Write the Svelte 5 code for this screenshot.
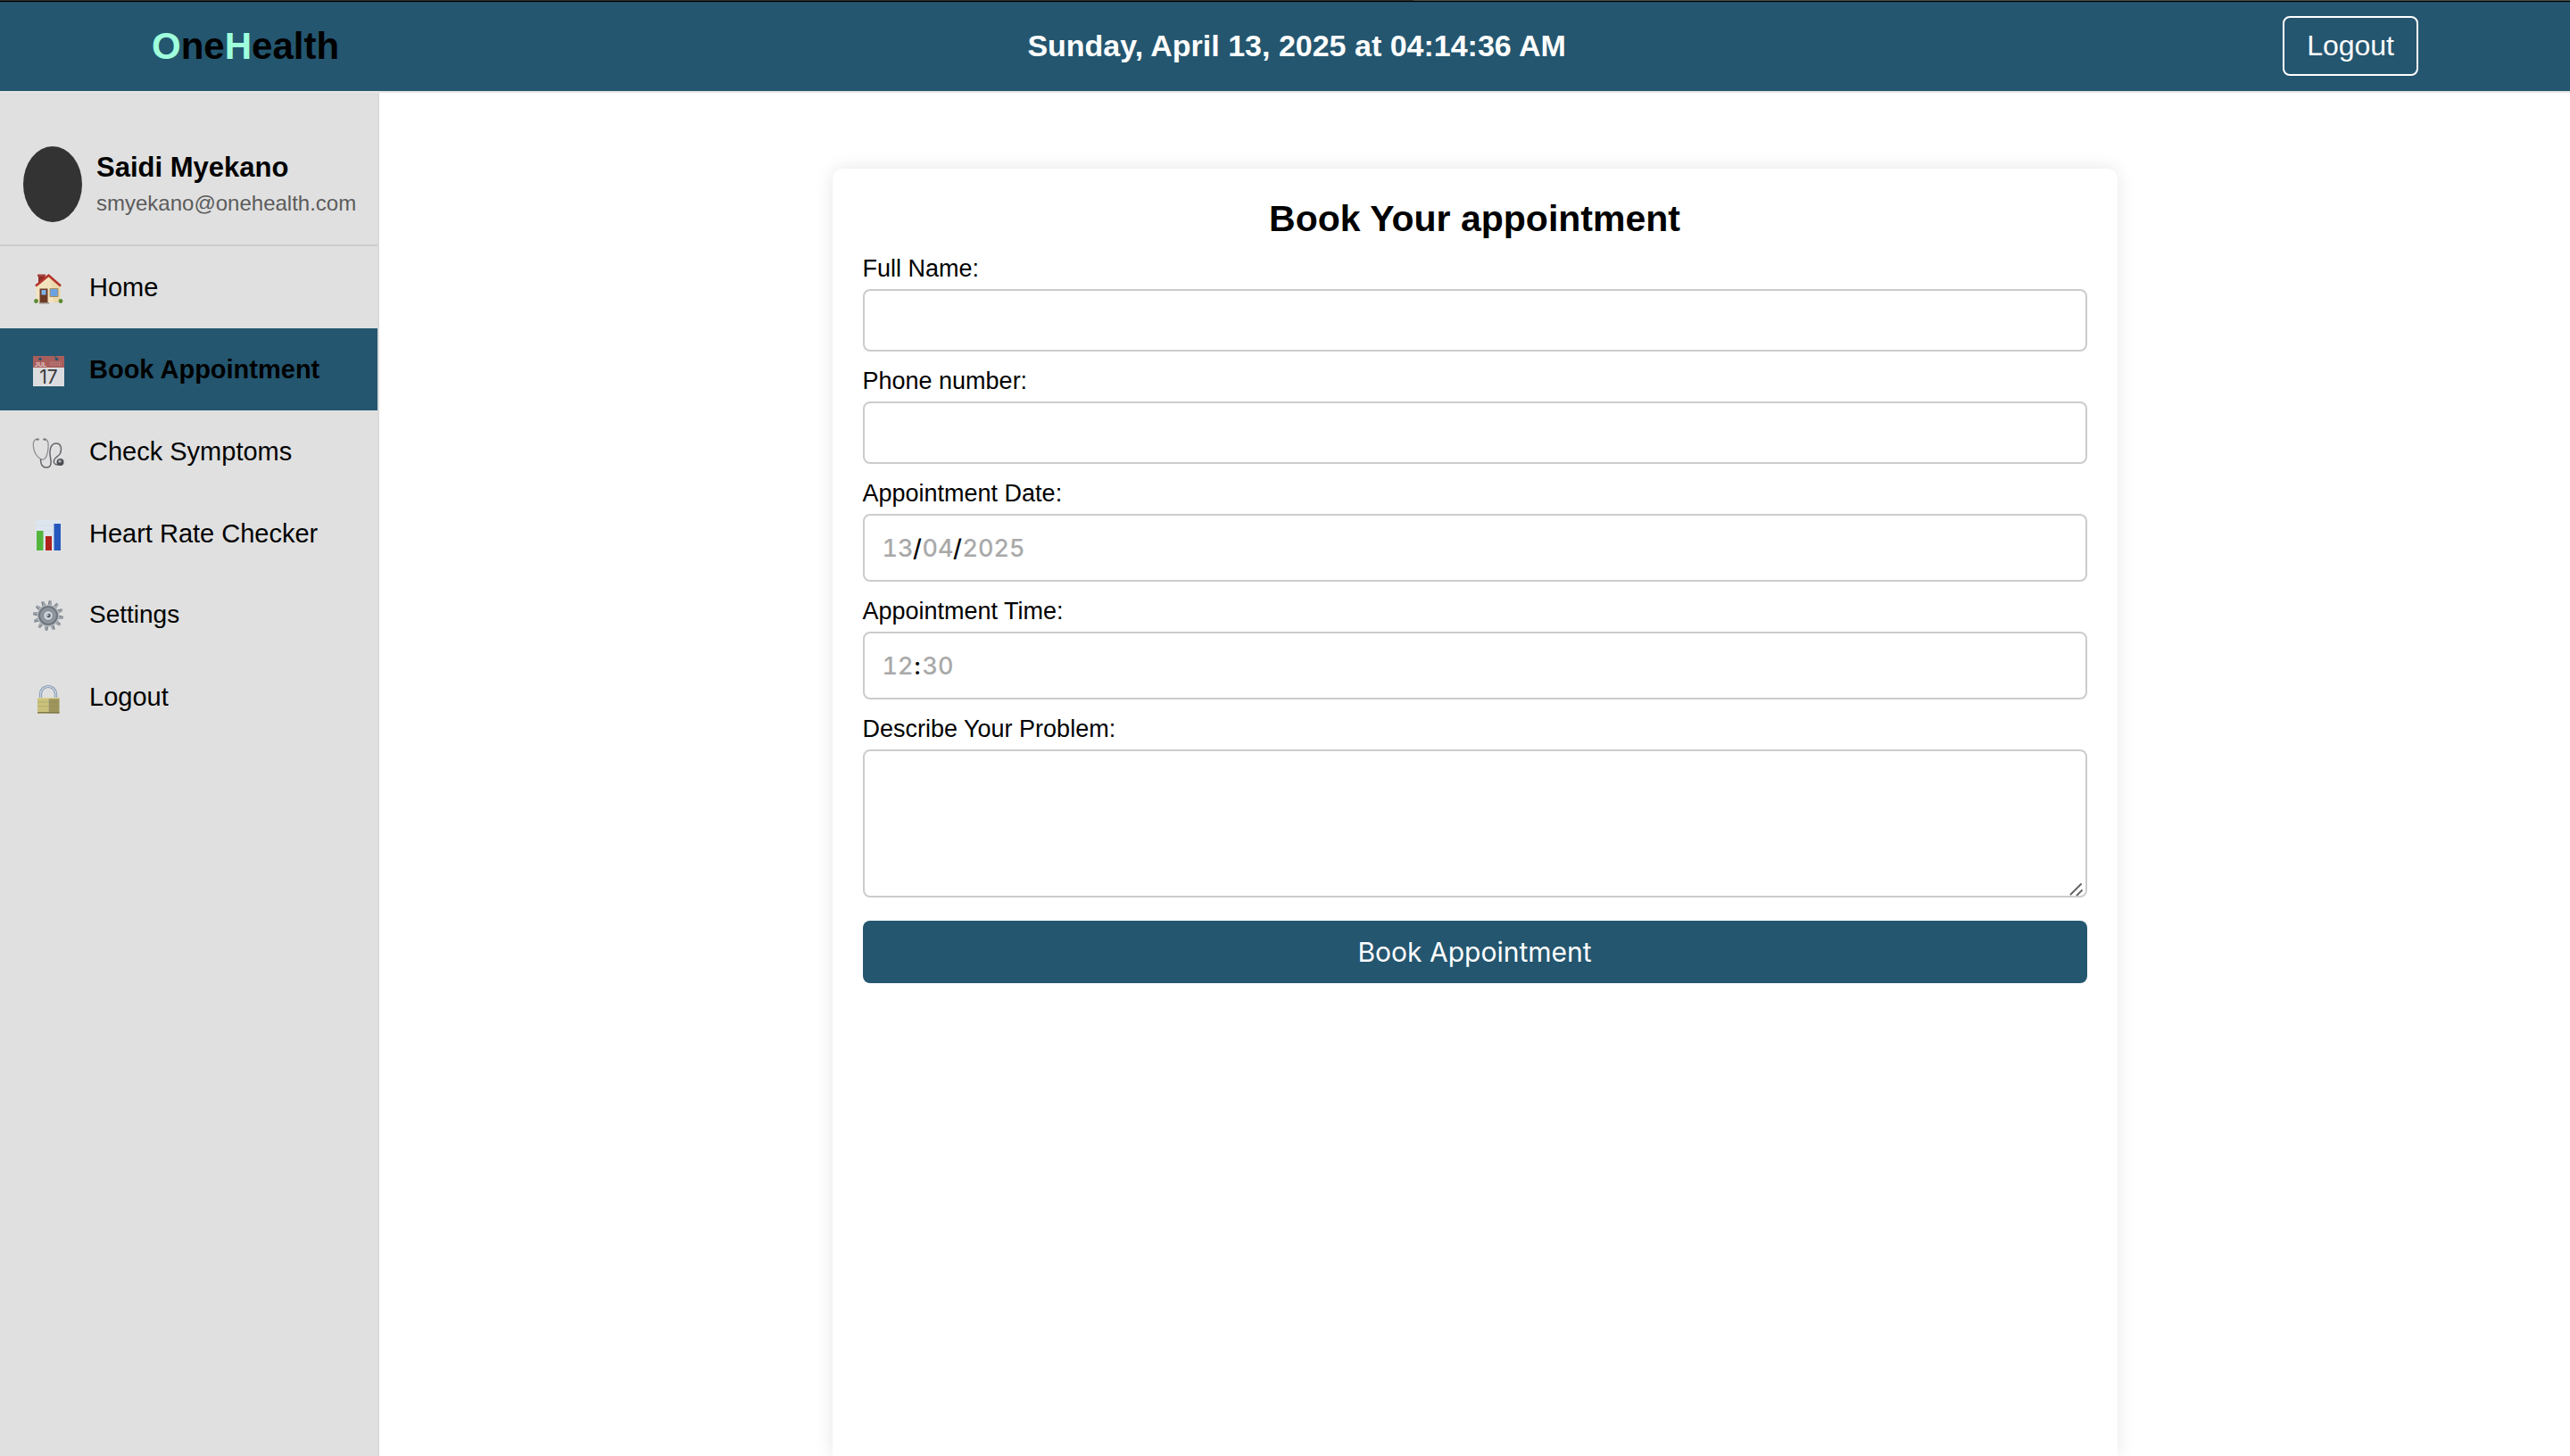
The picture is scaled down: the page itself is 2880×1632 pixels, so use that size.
<script lang="ts">
  const nav = [
    { label: 'Home', icon: 'home' },
    { label: 'Book Appointment', icon: 'calendar', active: true },
    { label: 'Check Symptoms', icon: 'stethoscope' },
    { label: 'Heart Rate Checker', icon: 'chart' },
    { label: 'Settings', icon: 'gear', compact: true },
    { label: 'Logout', icon: 'lock' },
  ];
  const teeth = Array.from({ length: 12 }, (_, i) => i * 30);
</script>

<div class="page">
  <div class="window-edge"></div>
  <header class="topbar">
    <a class="logo" href="#home"><span>O</span>ne<span>H</span>ealth</a>
    <time class="clock" datetime="2025-04-13T04:14:36">Sunday, April 13, 2025 at 04:14:36 AM</time>
    <button class="logout" type="button">Logout</button>
  </header>

  <div class="body">
    <aside class="sidebar">
      <div class="profile">
        <div class="avatar"></div>
        <div class="who">
          <strong>Saidi Myekano</strong>
          <span>smyekano@onehealth.com</span>
        </div>
      </div>
      <nav>
        {#each nav as item}
          <a class="item" class:active={item.active} class:compact={item.compact} href={'#' + item.icon}>
            <svg class="icon" viewBox="0 0 36 36" aria-hidden="true">
              {#if item.icon === 'home'}
                <path d="M7 2h7v10h-7z" fill="#8e2f28" />
                <path d="M6 1.500h9v2.500H6z" fill="#a8413a" />
                <path d="M4.500 15 18.500 3.500 31.500 15v18h-27z" fill="#f3e3bd" />
                <path d="M20 6 31.500 15v18h-7z" fill="#e6d09e" opacity=".6" />
                <path d="M4 14.500 18.500 2.800 32 14.500" fill="none" stroke="#b5332c" stroke-width="2.600" />
                <path d="M8.500 17.500h9V33h-9z" fill="#6d3a26" />
                <path d="M10.500 19h5v5.500h-5z" fill="#7db4ea" />
                <path d="M20 17.500h9v9h-9z" fill="#6aa3df" stroke="#a98a5c" />
                <path d="M8 33h11v1.500H8z" fill="#9a8f85" />
                <circle cx="4.500" cy="31.500" r="2.400" fill="#5c8a34" />
                <circle cx="32" cy="31.500" r="2.400" fill="#5c8a34" />
              {:else if item.icon === 'calendar'}
                <path d="M1 1h35v34H1z" fill="#dcdcde" />
                <path d="M1 1h35v13H1z" fill="#a95e5c" />
                <circle cx="9" cy="4.500" r="1.800" fill="#24566f" />
                <circle cx="27.500" cy="4.500" r="1.800" fill="#24566f" />
                <path d="M25 1l2.500 3" stroke="#24566f" stroke-width="1" />
                <path d="M20 8.500h13M20 11h13" stroke="#bd8582" stroke-width="1.400" stroke-dasharray="1.500 1" />
                <text class="month" x="3" y="12.500">JUL</text>
                <text class="day" x="18.500" y="32" text-anchor="middle">17</text>
              {:else if item.icon === 'stethoscope'}
                <g fill="none" stroke-linecap="round" stroke-linejoin="round">
                  <path d="M6 2.500C1.500 2 1 6 1.500 11c.6 6 4 12 9 14 5 1 7-6 7.500-13 .3-5 .5-9-4-9.500" stroke="#8d8f92" stroke-width="1.300" />
                  <path d="M9.500 25c0 5 2 9 6.500 9 6 0 5.500-6 4.500-11-1.500-8 0-16 6.500-16 5.500 0 6.500 6 4.500 11-1.500 4-6 4-7 8-.6 3 1 5 4 5" stroke="#63656a" stroke-width="1.500" />
                  <path d="M5 2.500h2M13 2.500h2" stroke="#77797d" stroke-width="2" />
                </g>
                <circle cx="31.500" cy="28" r="4" fill="#4b4b52" />
                <circle cx="31" cy="27" r="1.800" fill="#a9abb2" />
              {:else if item.icon === 'chart'}
                <path d="M4 1h28.500v34H4z" fill="#dde6ef" />
                <path d="M4 7h28M4 13h28M4 19h28M4 25h28" stroke="#cfdae5" stroke-width=".6" />
                <path d="M5 13h7.500v22H5z" fill="#53b53b" />
                <path d="M15 19h7v16h-7z" fill="#b0231b" />
                <path d="M24.500 5H32v30h-7.500z" fill="#2558bd" />
              {:else if item.icon === 'gear'}
                {#each teeth as angle}
                  <path d="M16.200 7 17 1h2.600l.8 6z" fill="#9aa1a8" transform={`rotate(${angle + 8} 18 18)`} />
                  <path d="M16.400 7 17 1" stroke="#666c73" stroke-width=".8" transform={`rotate(${angle + 8} 18 18)`} />
                {/each}
                <circle cx="18" cy="18" r="12.500" fill="#b4bac1" />
                <circle cx="18" cy="18" r="10" fill="#90969d" stroke="#70767e" stroke-width="2" />
                <circle cx="18" cy="18" r="5.500" fill="#ccd2d9" stroke="#7b828a" stroke-width="1" />
                <circle cx="18.500" cy="18" r="2.200" fill="#4d535c" />
                <circle cx="17.600" cy="17.600" r="1" fill="#e3e7eb" />
              {:else}
                <path d="M9.500 19v-6a8.500 8.500 0 0 1 17 0V19" fill="none" stroke="#7f90a6" stroke-width="3.200" />
                <path d="M9.500 19v-6a8.500 8.500 0 0 1 17 0V19" fill="none" stroke="#c3d3e6" stroke-width="1.600" />
                <path d="M6 17h12.500v17.500H6z" fill="#c9c17c" />
                <path d="M18.500 17h12v17.500h-12z" fill="#9d955c" />
                <path d="M6 17h24.500v1.200H6z" fill="#ddd69a" />
                <path d="M6 33h24.500v1.500H6z" fill="#7f7848" />
                <path d="M6 22h24.500M6 26.500h24.500" stroke="#8d8550" stroke-width=".5" opacity=".6" />
              {/if}
            </svg>
            <span>{item.label}</span>
          </a>
        {/each}
      </nav>
    </aside>

    <main>
      <form class="card">
        <h2>Book Your appointment</h2>
        <label for="name">Full Name:</label>
        <input id="name" class="box" type="text" />
        <label for="phone">Phone number:</label>
        <input id="phone" class="box" type="tel" />
        <label for="day">Appointment Date:</label>
        <div class="box segments">
          <input id="day" class="two" value="13" aria-label="Day" />
          <span>/</span>
          <input class="two" value="04" aria-label="Month" />
          <span>/</span>
          <input class="four" value="2025" aria-label="Year" />
        </div>
        <label for="hour">Appointment Time:</label>
        <div class="box segments">
          <input id="hour" class="two" value="12" aria-label="Hour" />
          <span>:</span>
          <input class="two" value="30" aria-label="Minute" />
        </div>
        <label for="problem">Describe Your Problem:</label>
        <div class="area">
          <textarea id="problem" class="box"></textarea>
          <svg class="grip" viewBox="0 0 16 16" aria-hidden="true">
            <path d="M1.500 14.500 13 3M8.500 15.500 14 10" />
          </svg>
        </div>
        <button class="submit" type="button">Book Appointment</button>
      </form>
    </main>
  </div>
</div>

<style>
  :global(body) {
    background: #fff;
  }
  .page {
    display: flex;
    flex-direction: column;
    height: 100vh;
    overflow: hidden;
    font-family: 'Liberation Sans', Arial, sans-serif;
    color: #000;
  }
  .page * {
    box-sizing: border-box;
  }
  .window-edge {
    flex: none;
    height: 2px;
    background: linear-gradient(to right, #2b312e 55%, #4b5148 55%);
    border-bottom: 1px solid #000;
  }
  .topbar {
    flex: none;
    display: flex;
    align-items: center;
    justify-content: space-between;
    height: 102px;
    padding: 0 170px 2px;
    background: #24566f;
    border-top: 1px solid #1e495f;
    border-bottom: 2px solid #e5e3e3;
  }
  .logo {
    font-size: 42px;
    font-weight: 700;
    color: #000;
    text-decoration: none;
  }
  .logo span {
    color: #9fffdc;
  }
  .clock {
    font-size: 34px;
    font-weight: 700;
    color: #fff;
  }
  .logout {
    margin-left: 32px;
    padding: 0 25px;
    height: 67px;
    border: 2px solid #fff;
    border-radius: 8px;
    background: transparent;
    color: #fff;
    font-family: inherit;
    font-size: 32px;
  }
  .body {
    flex: 1;
    display: flex;
    min-height: 0;
  }
  .sidebar {
    flex: none;
    width: 425px;
    background: #e0e0e0;
    border-right: 2px solid #dadada;
  }
  .profile {
    display: flex;
    gap: 16px;
    padding: 60px 26px 25px;
    border-bottom: 2px solid #ccc;
  }
  .avatar {
    flex: none;
    width: 66px;
    height: 85px;
    border-radius: 50%;
    background: #333;
  }
  .who {
    display: flex;
    flex-direction: column;
    gap: 6px;
    padding-top: 6px;
  }
  .who strong {
    font-size: 31px;
    line-height: 36px;
  }
  .who span {
    font-size: 24px;
    line-height: 32px;
    color: #5c5c5c;
  }
  .item {
    display: flex;
    align-items: center;
    gap: 28px;
    height: 92px;
    padding: 0 36px;
    font-size: 29px;
    color: #000;
    text-decoration: none;
    white-space: nowrap;
  }
  .active {
    background: #24566f;
    font-weight: 700;
  }
  .compact {
    height: 91px;
    padding-bottom: 2px;
    font-size: 28px;
  }
  .icon {
    flex: none;
    width: 36px;
    height: 36px;
    margin-top: 3px;
  }
  .month {
    font: 700 7px 'Liberation Sans', sans-serif;
    fill: #e3c9c8;
  }
  .day {
    font: 400 21px Inter, sans-serif;
    fill: #3a3a3c;
  }
  main {
    flex: 1;
    display: flex;
    justify-content: center;
    align-items: stretch;
    padding: 85px 34px 0;
    background: #fff;
  }
  .card {
    display: flex;
    flex-direction: column;
    width: 100%;
    max-width: 1440px;
    padding: 36px 34px 0;
    border-radius: 12px 12px 0 0;
    background: #fff;
    box-shadow: 0 0 20px rgba(0, 0, 0, 0.1);
  }
  h2 {
    margin: 0 0 3px;
    font-size: 41px;
    line-height: 40px;
    text-align: center;
  }
  label {
    padding: 16px 0 6px;
    font-size: 27px;
    line-height: 34px;
  }
  .box {
    display: block;
    width: 100%;
    height: 70px;
    margin: 0;
    padding: 0 20px;
    border: 2px solid #ccc;
    border-radius: 8px;
    background: #fff;
    font-family: Inter, sans-serif;
    font-size: 27px;
    outline: none;
  }
  .segments {
    display: flex;
    align-items: center;
    height: 76px;
    font-weight: 500;
  }
  .segments input {
    padding: 0;
    border: 0;
    background: none;
    color: #a9a9a9;
    font: inherit;
    font-variant-numeric: tabular-nums;
    outline: none;
  }
  .segments .two {
    width: 34px;
  }
  .segments .four {
    width: 70px;
  }
  .segments span {
    width: 11px;
    text-align: center;
  }
  .area {
    position: relative;
  }
  textarea.box {
    height: 166px;
    resize: none;
  }
  .grip {
    position: absolute;
    right: 4px;
    bottom: 2px;
    width: 16px;
    height: 16px;
    fill: none;
    stroke: #666;
    stroke-width: 2;
    stroke-linecap: round;
  }
  .submit {
    height: 70px;
    margin-top: 26px;
    border: 0;
    border-radius: 8px;
    background: #24566f;
    color: #fff;
    font-family: Inter, sans-serif;
    font-size: 30px;
  }
</style>
